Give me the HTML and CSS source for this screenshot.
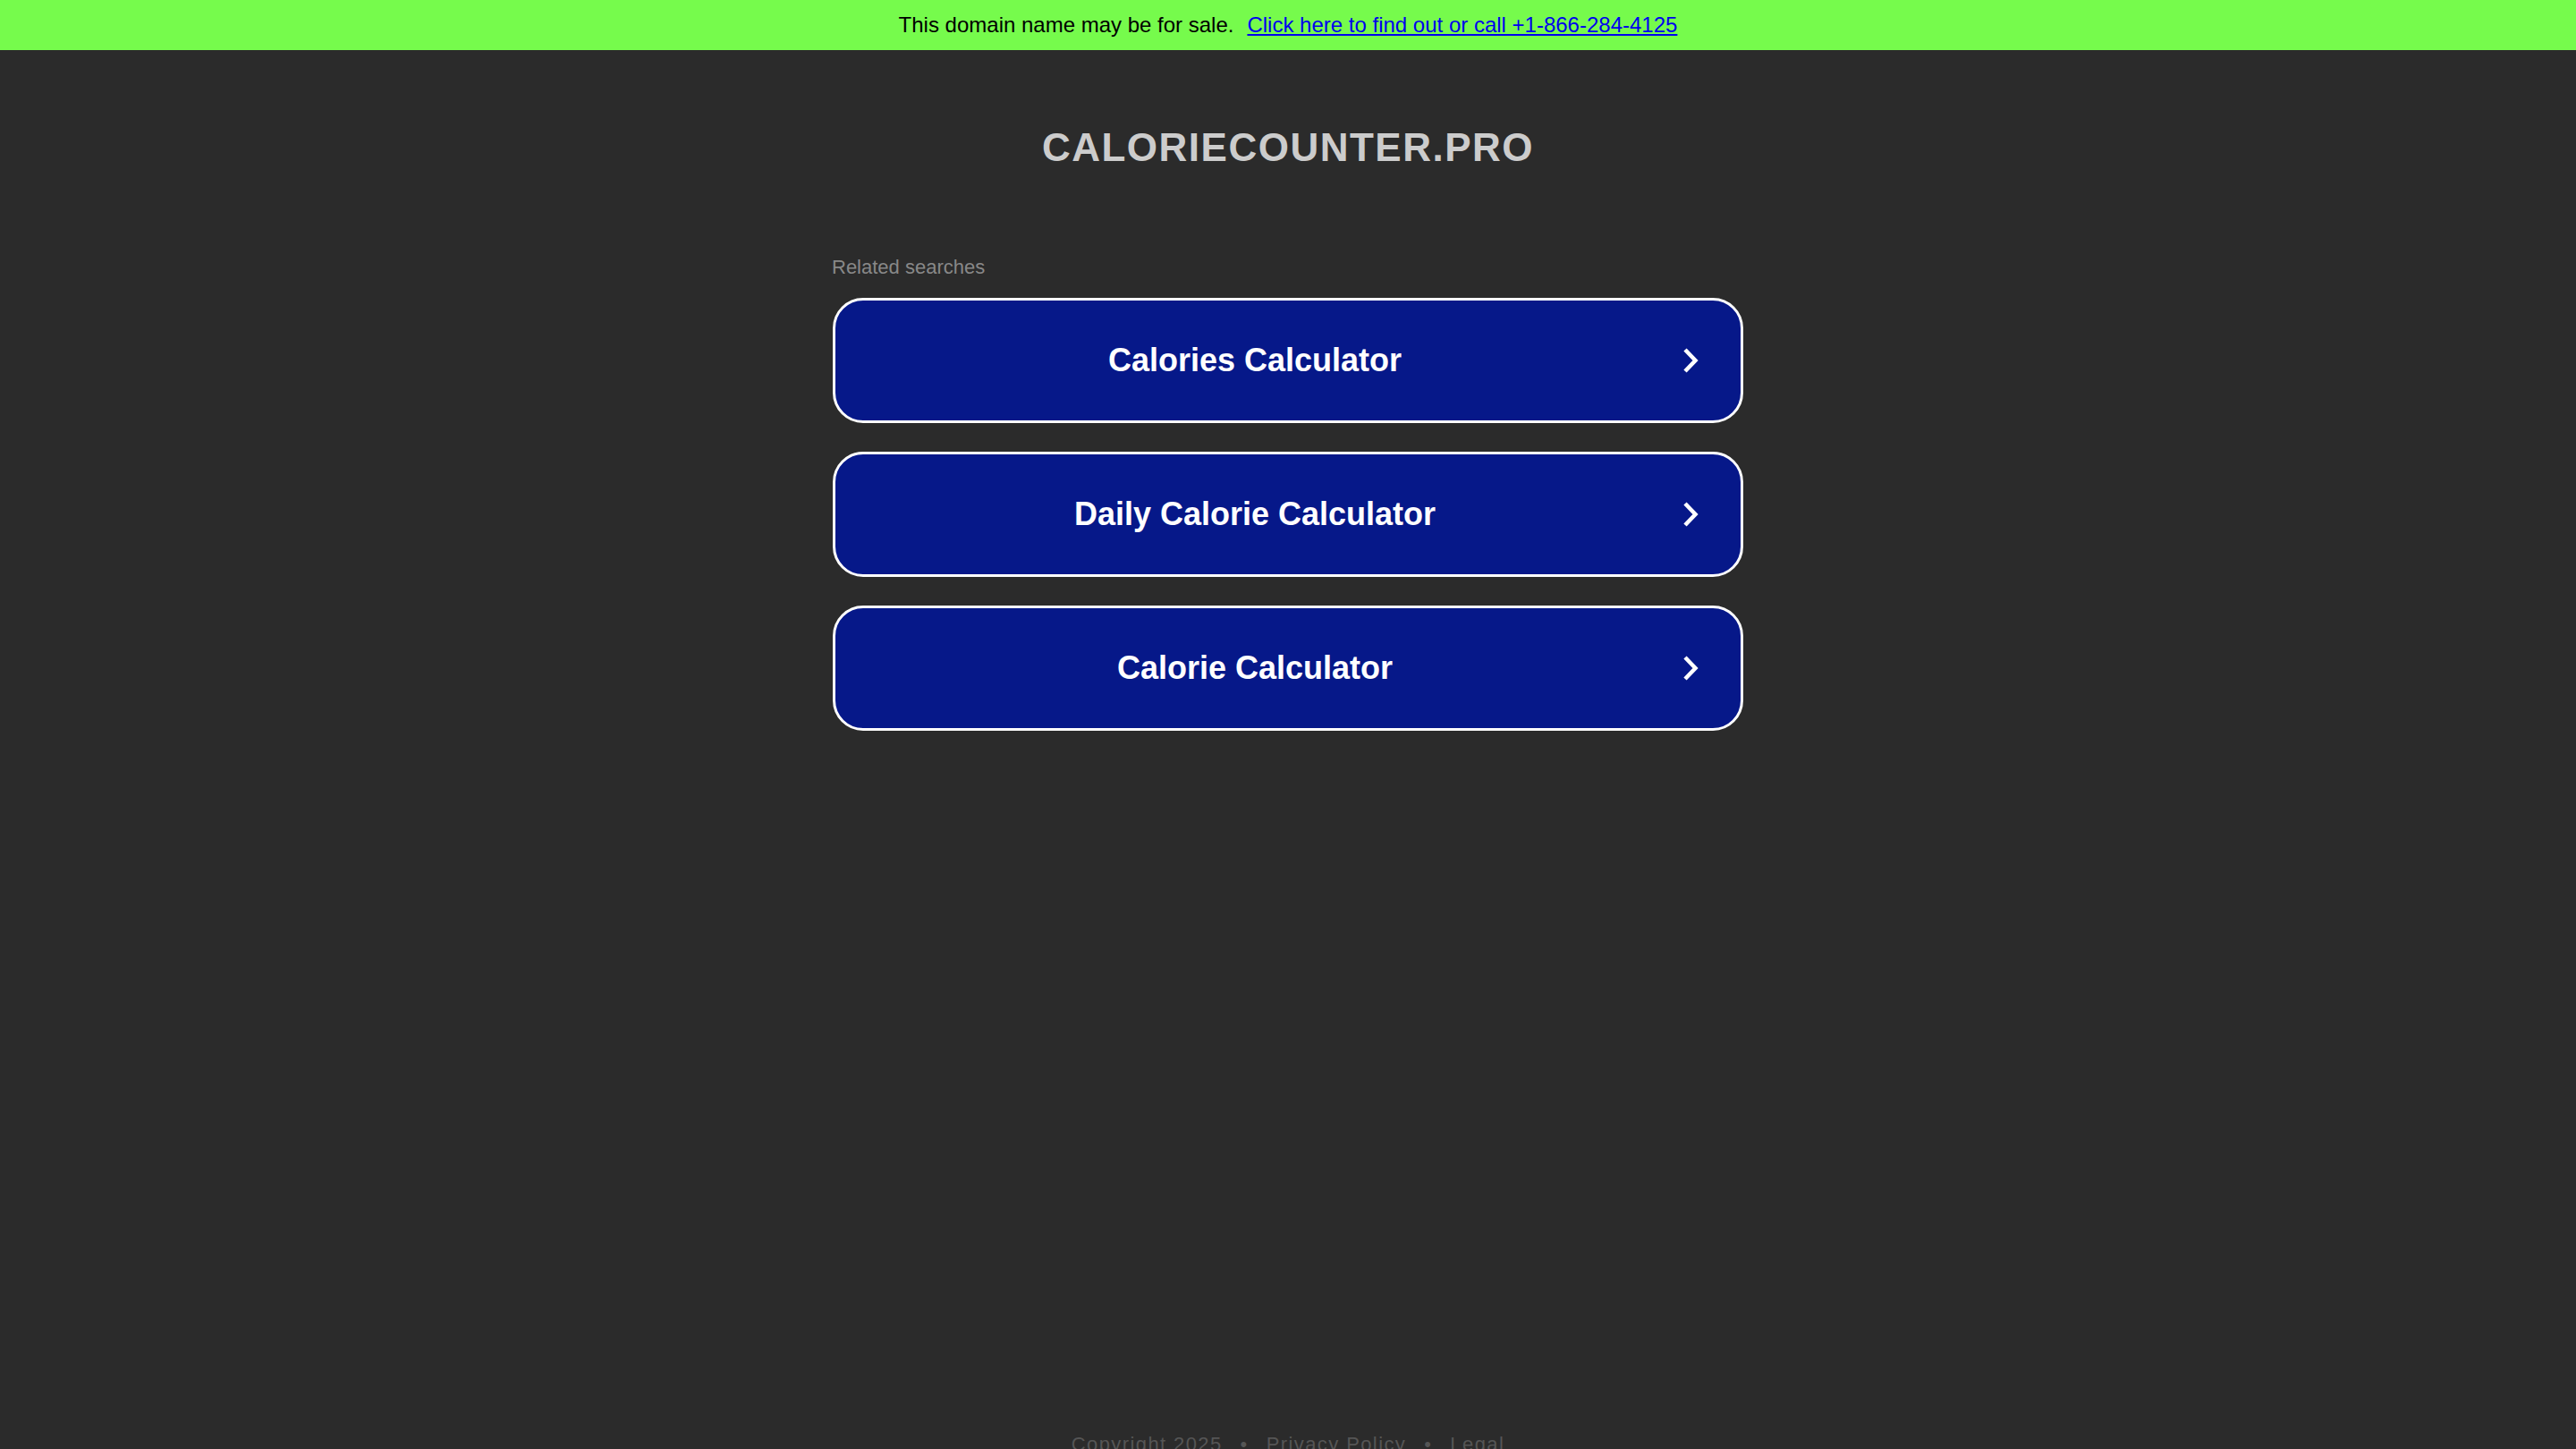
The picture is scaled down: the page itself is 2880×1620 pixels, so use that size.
FILE: index.html
```html
<!DOCTYPE html>
<html lang="en">
<head>
<meta charset="utf-8">
<title>caloriecounter.pro</title>
<link rel="stylesheet" href="styles.css">
</head>
<body>
<div class="sale-bar">
  <span class="sale-text">This domain name may be for sale.</span>
  <a class="sale-link" href="#">Click here to find out or call +1-866-284-4125</a>
</div>
<main class="content">
  <h1 class="domain">CALORIECOUNTER.PRO</h1>
  <div class="related-label">Related searches</div>
  <div class="links">
    <a class="search-link" href="#">
      <span class="search-text">Calories Calculator</span>
      <svg class="chevron" viewBox="0 0 18 30" width="18" height="30"><polyline points="3,3 14.5,15 3,27" fill="none" stroke="#ffffff" stroke-width="4.5"/></svg>
    </a>
    <a class="search-link" href="#">
      <span class="search-text">Daily Calorie Calculator</span>
      <svg class="chevron" viewBox="0 0 18 30" width="18" height="30"><polyline points="3,3 14.5,15 3,27" fill="none" stroke="#ffffff" stroke-width="4.5"/></svg>
    </a>
    <a class="search-link" href="#">
      <span class="search-text">Calorie Calculator</span>
      <svg class="chevron" viewBox="0 0 18 30" width="18" height="30"><polyline points="3,3 14.5,15 3,27" fill="none" stroke="#ffffff" stroke-width="4.5"/></svg>
    </a>
  </div>
</main>
<footer class="footer">
  <span>Copyright 2025</span>
  <span class="sep">•</span>
  <a href="#">Privacy Policy</a>
  <span class="sep">•</span>
  <a href="#">Legal</a>
</footer>
</body>
</html>
```

FILE: styles.css
```css
html, body {
  margin: 0;
  padding: 0;
}
body {
  background: #2b2b2b;
  font-family: "Liberation Sans", Arial, sans-serif;
}
.sale-bar {
  height: 56px;
  background: #76fb4c;
  display: flex;
  align-items: center;
  justify-content: center;
  font-size: 24px;
  color: #000000;
}
.sale-link {
  margin-left: 15px;
  color: #0000ee;
  text-decoration: underline;
}
.content {
  width: 1018px;
  margin: 0 auto;
  display: flex;
  flex-direction: column;
}
.domain {
  margin: 0;
  padding-top: 84px;
  font-size: 44px;
  line-height: 50px;
  font-weight: 700;
  letter-spacing: 1.5px;
  color: #cccccc;
  text-align: center;
}
.related-label {
  margin-top: 96px;
  margin-left: -1px;
  font-size: 22px;
  line-height: 26px;
  color: #888888;
}
.links {
  margin-top: 21px;
  display: flex;
  flex-direction: column;
  gap: 32px;
}
.search-link {
  box-sizing: border-box;
  height: 140px;
  display: flex;
  align-items: center;
  background: #061889;
  border: 3px solid #ffffff;
  border-radius: 34px;
  color: #ffffff;
  text-decoration: none;
}
.search-text {
  flex: 1;
  text-align: center;
  font-size: 36px;
  font-weight: 700;
}
.chevron {
  margin-left: 9px;
  margin-right: 47px;
  flex: none;
}
.footer {
  padding-top: 785px;
  padding-bottom: 40px;
  display: flex;
  justify-content: center;
  font-size: 22px;
  line-height: 26px;
  letter-spacing: 1.4px;
  color: #555555;
}
.footer a {
  color: #555555;
  text-decoration: none;
}
.sep {
  padding: 0 20px;
}
```
